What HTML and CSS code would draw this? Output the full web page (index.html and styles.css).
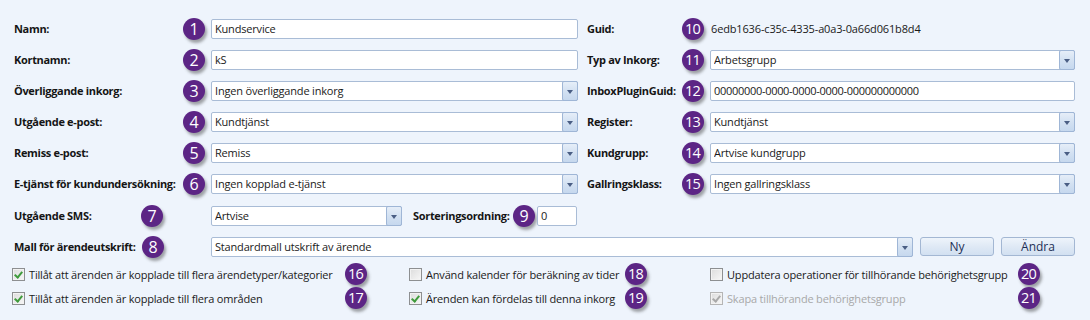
FILE: index.html
```html
<!DOCTYPE html>
<html lang="sv">
<head>
<meta charset="utf-8">
<title>Inkorg</title>
<link rel="stylesheet" href="styles.css">
</head>
<body>
<div class="form">
  <div class="grid6">
    <div class="lbl">Namn:</div><div class="bc"><span class="badge">1</span></div><div class="field">Kundservice</div>
    <div class="lbl rl">Guid:</div><div class="bc"><span class="badge two">10</span></div><div class="plain">6edb1636-c35c-4335-a0a3-0a66d061b8d4</div>

    <div class="lbl">Kortnamn:</div><div class="bc"><span class="badge">2</span></div><div class="field">kS</div>
    <div class="lbl rl">Typ av Inkorg:</div><div class="bc"><span class="badge two">11</span></div><div class="field select"><span class="val">Arbetsgrupp</span><span class="btn"></span></div>

    <div class="lbl">Överliggande inkorg:</div><div class="bc"><span class="badge">3</span></div><div class="field select"><span class="val">Ingen överliggande inkorg</span><span class="btn"></span></div>
    <div class="lbl rl">InboxPluginGuid:</div><div class="bc"><span class="badge two">12</span></div><div class="field guid">00000000-0000-0000-0000-000000000000</div>

    <div class="lbl">Utgående e-post:</div><div class="bc"><span class="badge">4</span></div><div class="field select"><span class="val">Kundtjänst</span><span class="btn"></span></div>
    <div class="lbl rl">Register:</div><div class="bc"><span class="badge two">13</span></div><div class="field select"><span class="val">Kundtjänst</span><span class="btn"></span></div>

    <div class="lbl">Remiss e-post:</div><div class="bc"><span class="badge">5</span></div><div class="field select"><span class="val">Remiss</span><span class="btn"></span></div>
    <div class="lbl rl">Kundgrupp:</div><div class="bc"><span class="badge two">14</span></div><div class="field select"><span class="val">Artvise kundgrupp</span><span class="btn"></span></div>

    <div class="lbl">E-tjänst för kundundersökning:</div><div class="bc"><span class="badge">6</span></div><div class="field select"><span class="val">Ingen kopplad e-tjänst</span><span class="btn"></span></div>
    <div class="lbl rl">Gallringsklass:</div><div class="bc"><span class="badge two">15</span></div><div class="field select"><span class="val">Ingen gallringsklass</span><span class="btn"></span></div>
  </div>

  <div class="row r7">
    <div class="lbl w7">Utgående SMS:</div><span class="badge">7</span>
    <div class="field select sms"><span class="val">Artvise</span><span class="btn"></span></div>
    <div class="lbl sort">Sorteringsordning:</div><span class="badge b9">9</span>
    <div class="field num">0</div>
  </div>

  <div class="row r8">
    <div class="lbl w8">Mall för ärendeutskrift:</div><span class="badge">8</span>
    <div class="field select mall"><span class="val">Standardmall utskrift av ärende</span><span class="btn"></span></div>
    <button class="pbtn">Ny</button>
    <button class="pbtn">Ändra</button>
  </div>

  <div class="checks">
    <div class="ck c1"><span class="cb on"></span><span class="ct">Tillåt att ärenden är kopplade till flera ärendetyper/kategorier</span><span class="badge two">16</span></div>
    <div class="ck c2"><span class="cb"></span><span class="ct">Använd kalender för beräkning av tider</span><span class="badge two">18</span></div>
    <div class="ck c3"><span class="cb"></span><span class="ct">Uppdatera operationer för tillhörande behörighetsgrupp</span><span class="badge two">20</span></div>

    <div class="ck c1"><span class="cb on"></span><span class="ct">Tillåt att ärenden är kopplade till flera områden</span><span class="badge two">17</span></div>
    <div class="ck c2"><span class="cb on"></span><span class="ct">Ärenden kan fördelas till denna inkorg</span><span class="badge two">19</span></div>
    <div class="ck c3 dis"><span class="cb on"></span><span class="ct">Skapa tillhörande behörighetsgrupp</span><span class="badge two">21</span></div>
  </div>
</div>
</body>
</html>
```

FILE: styles.css
```css
html, body {
  margin: 0;
  padding: 0;
  background: #eef4fc;
}
body {
  width: 1090px;
  height: 320px;
  overflow: hidden;
  font-family: "Open Sans", "Noto Sans", sans-serif;
  font-size: 11px;
  letter-spacing: -0.18px;
  color: #1a1a1a;
}
.form {
  padding-top: 13px;
}
.grid6 {
  display: grid;
  grid-template-columns: 169px 28px 367px 104px 28px 365px;
  grid-auto-rows: 31px;
  align-items: center;
  padding-left: 14px;
}
.lbl {
  font-weight: 700;
  letter-spacing: -0.32px;
  white-space: nowrap;
  color: #151515;
}
.rl {
  padding-left: 9px;
}
.bc {
  display: flex;
  align-items: center;
}
.badge {
  flex: none;
  width: 22px;
  height: 22px;
  border-radius: 50%;
  background: #5c2585;
  color: #fff;
  font-size: 16px;
  letter-spacing: 0;
  line-height: 22px;
  text-align: center;
  box-shadow: 2px 3px 3px rgba(60, 60, 60, 0.45);
}
.badge.two {
  font-size: 14.5px;
  letter-spacing: -0.8px;
  text-indent: -0.8px;
}
.field {
  box-sizing: border-box;
  height: 20px;
  border: 1px solid #a9bcd6;
  border-radius: 2px;
  background: #fff;
  padding-left: 3px;
  line-height: 18px;
  white-space: nowrap;
  overflow: hidden;
}
.plain {
  padding-left: 1px;
  white-space: nowrap;
  letter-spacing: -0.15px;
}
.guid {
  letter-spacing: -0.3px;
}
.select {
  display: flex;
  padding-right: 0;
  overflow: visible;
}
.select .val {
  flex: 1;
  overflow: hidden;
}
.btn {
  position: relative;
  flex: none;
  box-sizing: border-box;
  width: 16px;
  height: 20px;
  margin: -1px -1px -1px 0;
  border: 1px solid #9fb6d6;
  border-radius: 2px;
  background: linear-gradient(#e6eef8, #d3e1f2 50%, #c6d8ee);
}
.btn::after {
  content: "";
  position: absolute;
  left: 4px;
  top: 8px;
  border-left: 3.5px solid transparent;
  border-right: 3.5px solid transparent;
  border-top: 4px solid #4a5e84;
}
.row {
  display: flex;
  align-items: center;
  height: 31px;
  padding-left: 14px;
}
.r7 {
  margin-top: 1px;
}
.w7 {
  width: 127px;
}
.w8 {
  width: 128px;
}
.sms {
  width: 191px;
  margin-left: 48px;
}
.sort {
  margin-left: 11px;
  width: 100px;
}
.num {
  width: 40px;
  margin-left: 2px;
}
.mall {
  width: 702px;
  margin-left: 47px;
}
.pbtn {
  box-sizing: border-box;
  width: 74px;
  height: 19px;
  margin-left: 7px;
  padding: 0;
  border: 1px solid #a3b7d3;
  border-radius: 3px;
  background: linear-gradient(#eef4fb, #dfe9f5 50%, #d2e0f1);
  font-family: "Open Sans", "Noto Sans", sans-serif;
  font-size: 12px;
  color: #1d2f55;
  line-height: 17px;
}
.checks {
  display: grid;
  grid-template-columns: 397px 301px 330px;
  grid-auto-rows: 24px;
  align-items: center;
  padding-left: 12px;
}
.ck {
  display: flex;
  align-items: center;
  white-space: nowrap;
}
.c1 { width: 355px; }
.c2 { width: 238px; }
.c3 { width: 330px; }
.ck .badge {
  margin-left: auto;
}
.ct {
  margin-left: 4px;
}
.cb {
  position: relative;
  flex: none;
  box-sizing: border-box;
  width: 13px;
  height: 13px;
  border: 1px solid #8d8f91;
  background: linear-gradient(135deg, #dcdcdc, #f7f7f7);
  box-shadow: inset 0 0 0 1px #f2f2f2;
}
.cb.on::after {
  content: "";
  position: absolute;
  left: 3px;
  top: 1px;
  width: 3px;
  height: 6px;
  border-right: 2px solid #3f9b3c;
  border-bottom: 2px solid #3f9b3c;
  transform: rotate(40deg);
}
.dis .ct {
  color: #a8a8a8;
}
.dis .cb {
  border-color: #b5b5b5;
}
.dis .cb.on::after {
  border-color: #a9a9a9;
}
```
